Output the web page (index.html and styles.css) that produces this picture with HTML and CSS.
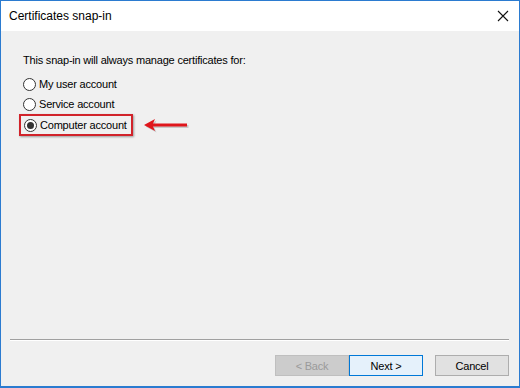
FILE: index.html
```html
<!DOCTYPE html>
<html lang="en">
<head>
    <meta charset="UTF-8">
    <title>Certificates snap-in</title>
    <link rel="stylesheet" href="styles.css">
</head>
<body>
<div class="window">
    <div class="titlebar">
        <span class="title">Certificates snap-in</span>
        <svg class="close" width="12" height="12" viewBox="0 0 12 12">
            <path d="M1 1 L11 11 M11 1 L1 11" stroke="#111" stroke-width="1.1"/>
        </svg>
    </div>
    <div class="content">
        <p class="lead">This snap-in will always manage certificates for:</p>
        <div class="options">
            <label class="option"><span class="radio"></span>My user account</label>
            <label class="option"><span class="radio"></span>Service account</label>
            <div class="marked">
                <label class="option highlight"><span class="radio checked"></span>Computer account</label>
                <svg class="arrow" width="50" height="16" viewBox="0 0 50 16">
                    <path d="M3 8 L14 2 L12 6.5 L46 6.5 L46 9.5 L12 9.5 L14 14 Z" fill="#c9c9c9" transform="translate(1.5,1.5)"/>
                    <path d="M3 8 L14 2 L12 6.5 L46 6.5 L46 9.5 L12 9.5 L14 14 Z" fill="#e0161c"/>
                </svg>
            </div>
        </div>
    </div>
    <div class="footer">
        <div class="sep"></div>
        <div class="buttons">
            <button class="btn disabled">&lt; Back</button>
            <button class="btn default">Next &gt;</button>
            <button class="btn cancel">Cancel</button>
        </div>
    </div>
</div>
</body>
</html>
```

FILE: styles.css
```css
*{
    box-sizing: border-box;
}
body{
    margin: 0;
    font-family: 'Liberation Sans', Arial, sans-serif;
    font-size: 11px;
    letter-spacing: -0.2px;
    color: #000;
}
.window{
    width: 520px;
    height: 388px;
    border: 1px solid #2b7bd0;
    border-bottom-width: 2px;
    background: #f0f0f0;
    display: flex;
    flex-direction: column;
}
.titlebar{
    height: 30px;
    background: #fff;
    display: flex;
    align-items: center;
    justify-content: space-between;
    padding: 0 10px 0 8px;
}
.title{
    font-size: 12px;
    letter-spacing: 0;
    color: #000;
}
.content{
    flex: 1;
    padding: 22px 0 0 22px;
}
.lead{
    margin: 0 0 8px 0;
    line-height: 15px;
}
.options{
    display: flex;
    flex-direction: column;
    gap: 4px;
}
.option{
    display: flex;
    align-items: center;
    gap: 3px;
    height: 16px;
    line-height: 16px;
    white-space: nowrap;
}
.radio{
    width: 13px;
    height: 13px;
    border: 1px solid #333;
    border-radius: 50%;
    background: #fff;
    display: flex;
    align-items: center;
    justify-content: center;
    flex-shrink: 0;
}
.radio.checked::after{
    content: "";
    width: 7px;
    height: 7px;
    border-radius: 50%;
    background: #333;
}
.marked{
    display: flex;
    align-items: center;
    gap: 8px;
    margin: -2px 0 0 -4px;
}
.highlight{
    width: 114px;
    height: 22px;
    padding-left: 3px;
    border: 2px solid #d1232a;
    box-shadow: 1px 1px 2px rgba(0,0,0,.35);
}
.footer{
    padding: 0 10px 10px 9px;
}
.sep{
    height: 2px;
    background: #a0a0a0;
    border-bottom: 1px solid #fff;
    background-clip: content-box;
    margin-bottom: 14px;
}
.buttons{
    display: flex;
    justify-content: flex-end;
}
.btn{
    width: 74px;
    height: 21px;
    font-family: inherit;
    font-size: 11px;
    letter-spacing: -0.2px;
    background: #e1e1e1;
    border: 1px solid #adadad;
    color: #000;
    padding: 0;
}
.btn.disabled{
    background: #cccccc;
    border-color: #bfbfbf;
    color: #9a9a9a;
}
.btn.default{
    background: #e5f1fb;
    border-color: #0078d7;
}
.btn.cancel{
    margin-left: 12px;
}
```
